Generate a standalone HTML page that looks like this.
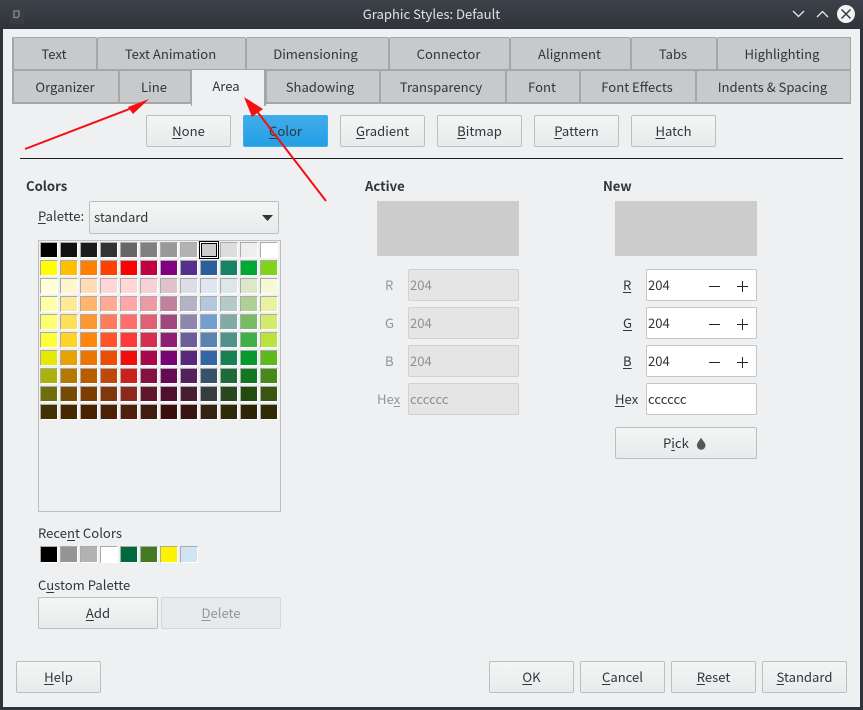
<!DOCTYPE html>
<html><head><meta charset="utf-8">
<style>
html,body{margin:0;padding:0;width:863px;height:710px;overflow:hidden;background:#2f343a}
body{position:relative;font-family:"Noto Sans CJK SC","Liberation Sans",sans-serif;font-size:13.1px;color:#31363b}
div,span.a{position:absolute;box-sizing:border-box}
u{text-underline-offset:2px;text-decoration-thickness:1px}
#tb{left:0;top:0;width:863px;height:29px;background:linear-gradient(#3d424a,#2f343a)}
#ti{left:0;top:4px;width:863px;text-align:center;color:#dfe1e2;line-height:19px}
#win{left:3px;top:29px;width:857px;height:678px;background:#eff0f2}
.t{height:34px;background:#c8c9ca;border:1px solid #a5a6a7;border-bottom:2px solid #a5a6a7;border-radius:2px 2px 0 0;text-align:center;line-height:31px;white-space:nowrap;padding-right:2px}
.b{height:32px;border:1px solid #bcbebf;border-radius:2px;background:linear-gradient(#f4f5f5,#e9eaeb);text-align:center;line-height:29px;white-space:nowrap}
.f{height:32px;width:111px;border:1px solid #c4c6c7;border-radius:2px;background:#fff;line-height:29px;padding-left:1px}
.d{background:#e5e5e6;border-color:#d0d1d2;color:#8f9192}
.l{white-space:nowrap;line-height:18px;margin-top:-1px}
.h{font-weight:bold;margin-top:0}
.g{color:#93959a}
#pal{left:38px;top:240px;width:243px;height:272px;background:#eff0f2;border:1px solid #bcbebf;padding:1px}
.sw{display:grid;grid-template-columns:repeat(12,20px);grid-auto-rows:18px}
.sw i{display:block;width:18px;height:16px;box-sizing:border-box;border-style:solid;border-width:1px;border-color:#aaa #fff #fff #aaa}
.r i{height:17px}
</style></head><body>
<div id="tb"></div>
<div id="ti">Graphic Styles: Default</div>
<svg class="a" style="position:absolute;left:0;top:0" width="863" height="29">
<rect x="10" y="5" width="14" height="19" fill="#3a3e44"/>
<path d="M14 11h5v5l-1.500 1.500H14z" fill="none" stroke="#8a8d90" stroke-width="1.300"/>
<path d="M793 11l5.500 5.500L804 11" fill="none" stroke="#e8e9ea" stroke-width="1.300"/>
<path d="M817 17l5.500-5.500L828 17" fill="none" stroke="#e8e9ea" stroke-width="1.300"/>
<circle cx="846" cy="14" r="9" fill="#f2f3f3"/>
<path d="M841.500 9.500l9 9M850.500 9.500l-9 9" stroke="#31363b" stroke-width="1.400"/>
</svg>
<div id="win"></div>

<div style="left:12px;top:37px;width:839px;height:67px;border-left:1px solid #a5a6a7;border-right:1px solid #a5a6a7"></div>
<div class="t" style="left:13px;top:37px;width:84px">Text</div>
<div class="t" style="left:97px;top:37px;width:149px">Text Animation</div>
<div class="t" style="left:246px;top:37px;width:143px;padding-right:4px">Dimensioning</div>
<div class="t" style="left:389px;top:37px;width:121px">Connector</div>
<div class="t" style="left:510px;top:37px;width:121px">Alignment</div>
<div class="t" style="left:631px;top:37px;width:86px">Tabs</div>
<div class="t" style="left:717px;top:37px;width:134px;padding-right:4px">Highlighting</div>
<div class="t" style="left:13px;top:70px;width:106px">Organizer</div>
<div class="t" style="left:119px;top:70px;width:72px">Line</div>
<div class="t" style="left:266px;top:70px;width:114px;padding-right:6px">Shadowing</div>
<div class="t" style="left:380px;top:70px;width:126px;padding-right:4px">Transparency</div>
<div class="t" style="left:506px;top:70px;width:74px">Font</div>
<div class="t" style="left:580px;top:70px;width:116px">Font Effects</div>
<div class="t" style="left:696px;top:70px;width:155px">Indents &amp; Spacing</div>
<div style="left:191px;top:70px;width:75px;height:36px;background:#eff0f2;border-right:2px solid #a5a6a7;border-left:1px solid #a5a6a7;text-align:center;line-height:31px;padding-right:4px;color:#31363b">Area</div>

<div class="b" style="left:146px;top:115px;width:85px"><u>N</u>one</div>
<div class="b" style="left:243px;top:115px;width:85px;background:linear-gradient(#40ace9,#239fe6);border-color:#3daee9"><u>C</u>olor</div>
<div class="b" style="left:340px;top:115px;width:85px"><u>G</u>radient</div>
<div class="b" style="left:437px;top:115px;width:85px"><u>B</u>itmap</div>
<div class="b" style="left:534px;top:115px;width:85px"><u>P</u>attern</div>
<div class="b" style="left:631px;top:115px;width:85px"><u>H</u>atch</div>
<div style="left:20px;top:158px;width:823px;height:1px;background:#1c1e20"></div>

<div class="l h" style="left:26px;top:177px">Colors</div>
<div class="l h" style="left:365px;top:177px">Active</div>
<div class="l h" style="left:603px;top:177px">New</div>

<div class="l" style="left:38px;top:208px"><u>P</u>alette:</div>
<div class="b" style="left:89px;top:201px;width:190px;height:33px;text-align:left;padding-left:4px;line-height:29px">standard</div>
<svg style="position:absolute;left:262px;top:215px" width="12" height="6"><path d="M0 0h11L5.500 6z" fill="#31363b"/></svg>

<div id="pal"><div class="sw" style="left:1px;top:1px">
<i style="background:#000000"></i><i style="background:#111111"></i><i style="background:#1c1c1c"></i><i style="background:#333333"></i><i style="background:#666666"></i><i style="background:#808080"></i><i style="background:#999999"></i><i style="background:#b2b2b2"></i><i style="background:#cccccc"></i><i style="background:#dddddd"></i><i style="background:#eeeeee"></i><i style="background:#ffffff"></i>
<i style="background:#ffff00"></i><i style="background:#ffbf00"></i><i style="background:#ff8000"></i><i style="background:#ff4000"></i><i style="background:#ff0000"></i><i style="background:#bf0041"></i><i style="background:#800080"></i><i style="background:#55308d"></i><i style="background:#2a6099"></i><i style="background:#158466"></i><i style="background:#00a933"></i><i style="background:#81d41a"></i>
<i style="background:#ffffd7"></i><i style="background:#fff5ce"></i><i style="background:#ffdbb6"></i><i style="background:#ffd7d7"></i><i style="background:#ffd7d7"></i><i style="background:#f7d1d5"></i><i style="background:#e0c2cd"></i><i style="background:#dedce6"></i><i style="background:#dee6ef"></i><i style="background:#dee7e5"></i><i style="background:#dde8cb"></i><i style="background:#f6f9d4"></i>
<i style="background:#ffffa6"></i><i style="background:#ffe994"></i><i style="background:#ffb66c"></i><i style="background:#ffaa95"></i><i style="background:#ffa6a6"></i><i style="background:#ec9ba4"></i><i style="background:#bf819e"></i><i style="background:#b4b2c5"></i><i style="background:#b4c7dc"></i><i style="background:#b3cac7"></i><i style="background:#afd095"></i><i style="background:#e8f2a1"></i>
<i style="background:#ffff6d"></i><i style="background:#ffde59"></i><i style="background:#ff972f"></i><i style="background:#ff7b59"></i><i style="background:#ff6d6d"></i><i style="background:#e16173"></i><i style="background:#a1467e"></i><i style="background:#8e86ae"></i><i style="background:#729fcf"></i><i style="background:#81aca6"></i><i style="background:#77bc65"></i><i style="background:#d4ea6b"></i>
<i style="background:#ffff38"></i><i style="background:#ffd428"></i><i style="background:#ff860d"></i><i style="background:#ff5429"></i><i style="background:#ff3838"></i><i style="background:#d62e4e"></i><i style="background:#8d1d75"></i><i style="background:#6b5e9b"></i><i style="background:#5983b0"></i><i style="background:#50938a"></i><i style="background:#3faf46"></i><i style="background:#bbe33d"></i>
<i style="background:#e6e905"></i><i style="background:#e8a202"></i><i style="background:#ea7500"></i><i style="background:#ed4c05"></i><i style="background:#f10d0c"></i><i style="background:#a7074b"></i><i style="background:#780373"></i><i style="background:#5b277d"></i><i style="background:#3465a4"></i><i style="background:#168253"></i><i style="background:#069a2e"></i><i style="background:#5eb91e"></i>
<i style="background:#acb20c"></i><i style="background:#b47804"></i><i style="background:#b85c00"></i><i style="background:#be480a"></i><i style="background:#c9211e"></i><i style="background:#861141"></i><i style="background:#650953"></i><i style="background:#55215b"></i><i style="background:#355269"></i><i style="background:#1e6a39"></i><i style="background:#127622"></i><i style="background:#468a1a"></i>
<i style="background:#706e0c"></i><i style="background:#784b04"></i><i style="background:#7b3d00"></i><i style="background:#813709"></i><i style="background:#8d281e"></i><i style="background:#611729"></i><i style="background:#4e102d"></i><i style="background:#481d32"></i><i style="background:#383d3c"></i><i style="background:#28471f"></i><i style="background:#224b12"></i><i style="background:#395511"></i>
<i style="background:#443205"></i><i style="background:#472702"></i><i style="background:#492300"></i><i style="background:#4b2204"></i><i style="background:#50200c"></i><i style="background:#421c0f"></i><i style="background:#3a0f0d"></i><i style="background:#381510"></i><i style="background:#352312"></i><i style="background:#2f2a08"></i><i style="background:#2d2606"></i><i style="background:#302a05"></i>
</div></div>
<div style="left:199px;top:241px;width:20px;height:18px;border:1px solid #000;background:#ccc;box-shadow:inset 0 0 0 1px #fff,inset 0 0 0 2px #000"></div>

<div class="l" style="left:38px;top:525px">Rece<u>n</u>t Colors</div>
<div class="sw r" style="left:40px;top:546px">
<i style="background:#000"></i><i style="background:#949494"></i><i style="background:#b2b2b2"></i><i style="background:#fff"></i><i style="background:#006a3f"></i><i style="background:#437a24"></i><i style="background:#fff200"></i><i style="background:#cfe5f3"></i>
</div>
<div class="l" style="left:38px;top:577px">C<u>u</u>stom Palette</div>
<div class="b" style="left:38px;top:597px;width:120px"><u>A</u>dd</div>
<div class="b g" style="left:161px;top:597px;width:120px;background:#e8e9ea;border-color:#d4d5d6"><u>D</u>elete</div>

<div style="left:377px;top:201px;width:142px;height:55px;background:#cccccc"></div>
<div style="left:615px;top:201px;width:142px;height:55px;background:#cccccc"></div>

<div class="l g" style="left:385px;top:277px">R</div>
<div class="l g" style="left:385px;top:315px">G</div>
<div class="l g" style="left:385px;top:353px">B</div>
<div class="l g" style="left:377px;top:391px">He<u>x</u></div>
<div class="f d" style="left:408px;top:269px">204</div>
<div class="f d" style="left:408px;top:307px">204</div>
<div class="f d" style="left:408px;top:345px">204</div>
<div class="f d" style="left:408px;top:383px">cccccc</div>

<div class="l" style="left:623px;top:277px"><u>R</u></div>
<div class="l" style="left:623px;top:315px"><u>G</u></div>
<div class="l" style="left:623px;top:353px"><u>B</u></div>
<div class="l" style="left:615px;top:391px"><u>H</u>ex</div>
<div class="f" style="left:646px;top:269px">204</div>
<div class="f" style="left:646px;top:307px">204</div>
<div class="f" style="left:646px;top:345px">204</div>
<div class="f" style="left:646px;top:383px">cccccc</div>
<svg style="position:absolute;left:700px;top:270px" width="50" height="100">
<path d="M9 16.500h11M37 16.500h11M42.500 11v11M9 54.500h11M37 54.500h11M42.500 49v11M9 92.500h11M37 92.500h11M42.500 87v11" stroke="#232629" stroke-width="1" fill="none"/>
</svg>
<div class="b" style="left:615px;top:427px;width:142px;text-align:left;padding-left:47px">P<u>i</u>ck</div>
<svg style="position:absolute;left:696px;top:437px" width="11" height="13"><path d="M5 .5C6 3 9.500 5.500 9.500 8.500a4.300 4.300 0 0 1-8.600 0C.9 5.500 4 3 5 .5z" fill="#55585b"/></svg>

<div class="b" style="left:16px;top:661px;width:85px"><u>H</u>elp</div>
<div class="b" style="left:489px;top:661px;width:85px"><u>O</u>K</div>
<div class="b" style="left:580px;top:661px;width:85px"><u>C</u>ancel</div>
<div class="b" style="left:671px;top:661px;width:85px"><u>R</u>eset</div>
<div class="b" style="left:762px;top:661px;width:85px"><u>S</u>tandard</div>

<svg style="position:absolute;left:0;top:0" width="863" height="710">
<path d="M25 149L132 108" stroke="#f50f14" stroke-width="2" fill="none"/>
<path d="M149 99L128 107L133 114z" fill="#f50f14"/>
<path d="M326 201L256 110" stroke="#f50f14" stroke-width="2" fill="none"/>
<path d="M244 97L263 109L252 117z" fill="#f50f14"/>
</svg>
</body></html>
